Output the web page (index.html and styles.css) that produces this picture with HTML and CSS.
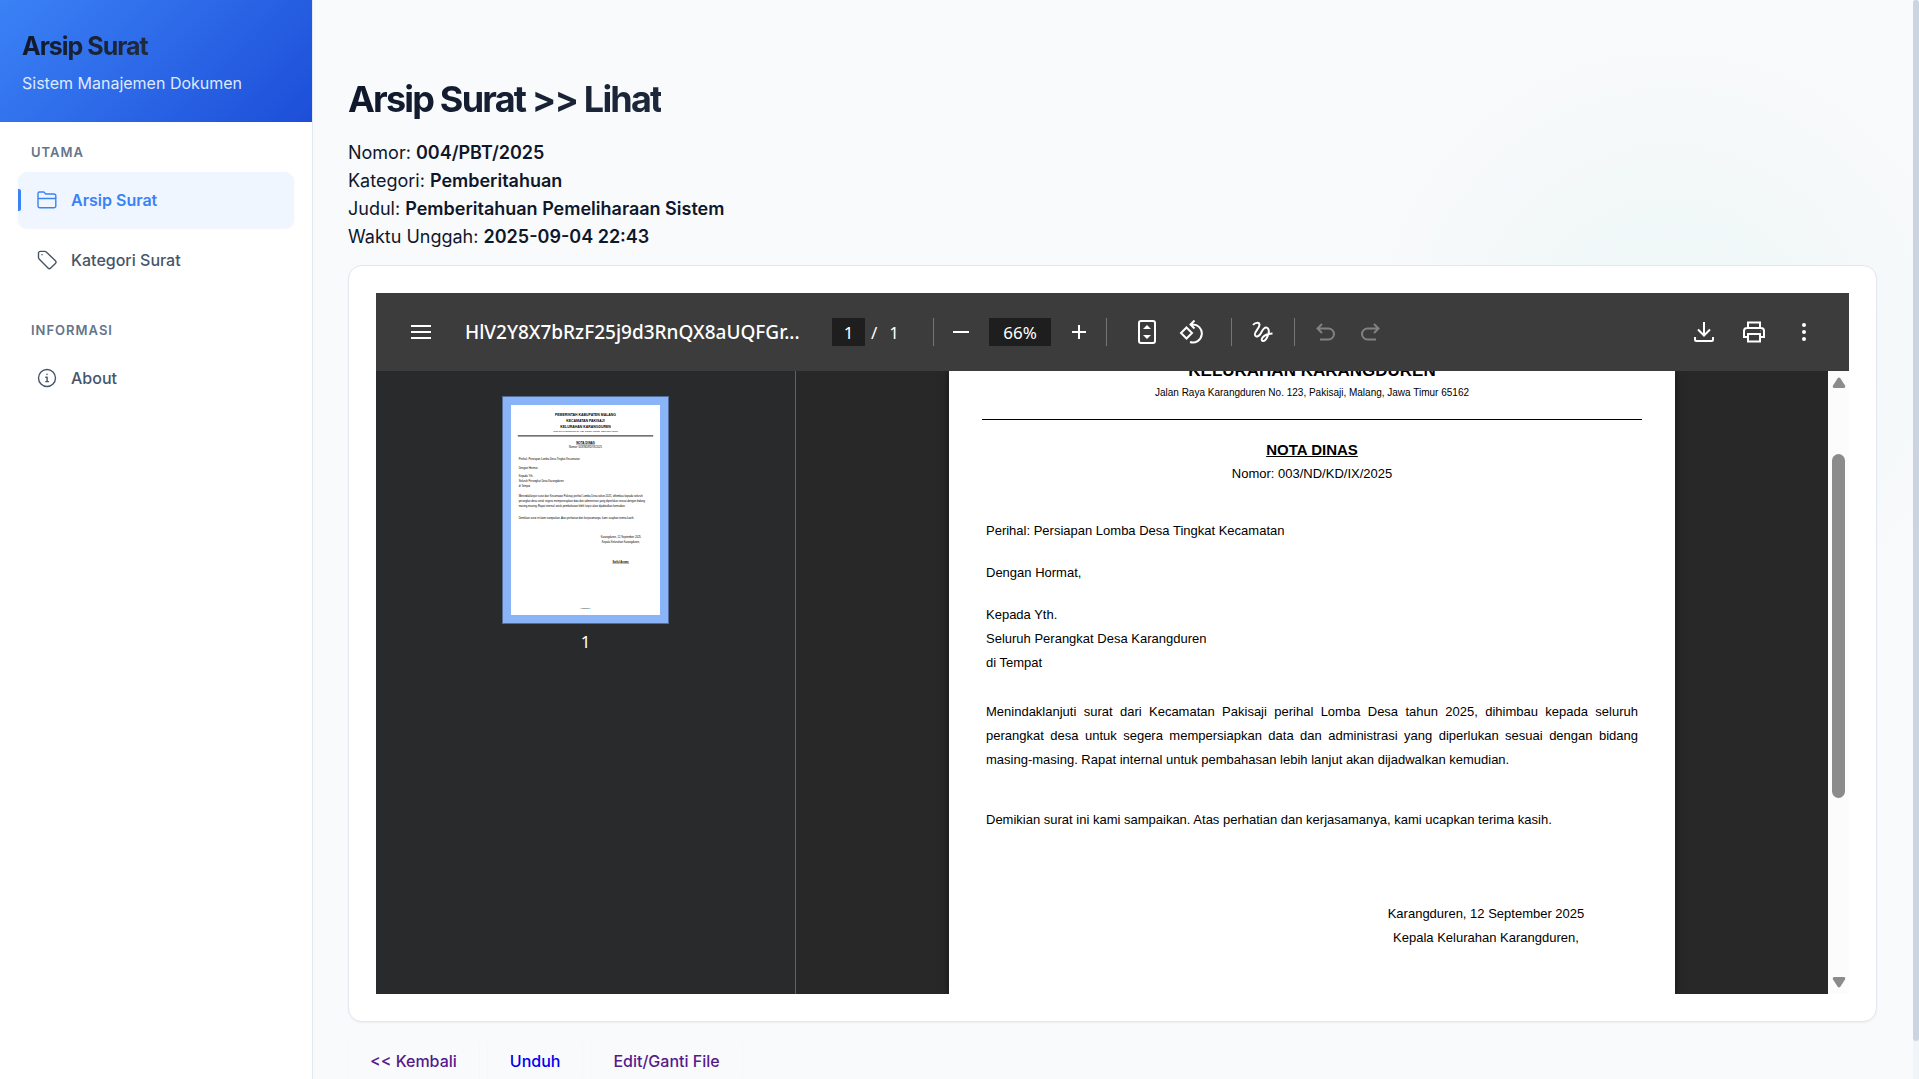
FILE: index.html
```html
<!DOCTYPE html>
<html lang="id">
<head>
<meta charset="utf-8">
<meta name="viewport" content="width=device-width, initial-scale=1">
<title>Arsip Surat &gt;&gt; Lihat</title>
<link rel="stylesheet" href="styles.css">
</head>
<body>
<div class="app">
  <aside class="sidebar">
    <header class="brand">
      <h2 class="brand-name">Arsip Surat</h2>
      <p class="brand-tagline">Sistem Manajemen Dokumen</p>
    </header>
    <nav class="nav">
      <h3 class="nav-heading">UTAMA</h3>
      <a class="nav-link active" href="#arsip">
        <svg class="nav-icon" viewBox="0 0 20 20"><path d="M1 16V3.500a1.500 1.500 0 0 1 1.500-1.500h4.300l2 2h8.200a1.800 1.800 0 0 1 1.800 1.800V16a1.800 1.800 0 0 1-1.800 1.800H2.800A1.800 1.800 0 0 1 1 16zM1 8.500h18"/></svg>
        Arsip Surat
      </a>
      <a class="nav-link" href="#kategori">
        <svg class="nav-icon" viewBox="0 0 20 20"><path d="M1.500 3.200v4.400c0 .5.200 1 .6 1.400l8.900 9c.8.800 1.900.8 2.700 0l4.700-4.600c.8-.8.8-1.900 0-2.700L9.300 2c-.4-.4-.9-.6-1.400-.6H3.400c-1 0-1.900.8-1.900 1.800zM5 4.800h.1"/></svg>
        Kategori Surat
      </a>
      <h3 class="nav-heading second">INFORMASI</h3>
      <a class="nav-link" href="#about">
        <svg class="nav-icon" viewBox="0 0 20 20"><circle cx="10" cy="10" r="8.500"/><path d="M8.800 9.200h1.300v4.300M8.800 13.600h2.700M10 6.200v.4"/></svg>
        About
      </a>
    </nav>
  </aside>

  <main class="main">
    <h1 class="title">Arsip Surat &gt;&gt; Lihat</h1>
    <div class="meta">
      <div>Nomor: <strong>004/PBT/2025</strong></div>
      <div>Kategori: <strong>Pemberitahuan</strong></div>
      <div>Judul: <strong>Pemberitahuan Pemeliharaan Sistem</strong></div>
      <div>Waktu Unggah: <strong>2025-09-04 22:43</strong></div>
    </div>

    <section class="card">
      <div class="viewer">
        <div class="toolbar">
          <button class="tool menu" aria-label="Menu"><svg viewBox="0 0 24 24"><path d="M2 6h20M2 12h20M2 18h20"/></svg></button>
          <span class="file-name">HlV2Y8X7bRzF25j9d3RnQX8aUQFGr...</span>
          <div class="pages"><input class="field page-field" aria-label="Halaman" value="1"><span>/</span><span>1</span></div>
          <span class="divider"></span>
          <div class="zoom">
            <button class="tool" aria-label="Perkecil"><svg viewBox="0 0 24 24"><path d="M4 12h16"/></svg></button>
            <input class="field zoom-field" aria-label="Zoom" value="66%">
            <button class="tool" aria-label="Perbesar"><svg viewBox="0 0 24 24"><path d="M5 12h14M12 5v14"/></svg></button>
          </div>
          <span class="divider"></span>
          <div class="fit">
            <button class="tool" aria-label="Paskan"><svg viewBox="0 0 24 24"><rect x="4" y="1" width="16" height="22" rx="2"/><path class="solid" d="M8 9l4-4 4 4zM8 15l4 4 4-4z"/></svg></button>
            <button class="tool" aria-label="Putar"><svg viewBox="0 0 24 24"><path d="M7.500 7.500L13 13l-5.500 5.500L2 13zM13 4.500a9 9 0 1 1-2 17.500M15.500 .5L11.500 4.500l4 4"/></svg></button>
          </div>
          <span class="divider"></span>
          <button class="tool pen" aria-label="Gambar"><svg viewBox="0 0 24 24"><path d="M2 5c2-2.500 6-3 6.500-.5C9 8 3 11.500 4 15c1 3 4.500 1 6-2 1.500-3.500 4-6.500 6.500-5 3.500 3-1 13-4.500 13-3 0-1-7 9.500-7.500"/></svg></button>
          <span class="divider"></span>
          <div class="history">
            <button class="tool" aria-label="Urungkan" disabled><svg viewBox="0 0 24 24"><path d="M8 4L3.500 8.500 8 13M3.500 8.500h11a5.500 5.500 0 0 1 0 11H6"/></svg></button>
            <button class="tool" aria-label="Ulangi" disabled><svg viewBox="0 0 24 24"><path d="M16 4l4.500 4.500L16 13M20.500 8.500h-11a5.500 5.500 0 0 0 0 11H18"/></svg></button>
          </div>
          <div class="actions">
            <button class="tool" aria-label="Unduh"><svg viewBox="0 0 24 24"><path d="M12 2v13M6 9.500l6 6 6-6M3 17v2.500q0 1.500 1.500 1.500h15q1.500 0 1.500-1.500V17"/></svg></button>
            <button class="tool" aria-label="Cetak"><svg viewBox="0 0 24 24"><path d="M6 17H2v-6q0-3 3-3h14q3 0 3 3v6h-4M6 8V2.500h12V8M6 14h12v7.500H6zM18.500 11h.2"/></svg></button>
            <button class="tool" aria-label="Lainnya"><svg viewBox="0 0 24 24"><path class="solid" d="M12 3a2 2 0 1 1 0 4 2 2 0 0 1 0-4zM12 10a2 2 0 1 1 0 4 2 2 0 0 1 0-4zM12 17a2 2 0 1 1 0 4 2 2 0 0 1 0-4z"/></svg></button>
          </div>
        </div>

        <div class="viewer-body">
          <div class="thumbs">
            <button class="thumb" aria-label="Halaman 1">
              <svg viewBox="0 0 726 1024">
                <g text-anchor="middle">
                  <g font-weight="bold" font-size="17">
                    <text x="363" y="52">PEMERINTAH KABUPATEN MALANG</text>
                    <text x="363" y="82">KECAMATAN PAKISAJI</text>
                    <text x="363" y="111">KELURAHAN KARANGDUREN</text>
                  </g>
                  <text x="363" y="130" font-size="10">Jalan Raya Karangduren No. 123, Pakisaji, Malang, Jawa Timur 65162</text>
                  <path d="M33 151h660" stroke="#444" stroke-width="6"/>
                  <text x="363" y="189" font-size="15" font-weight="bold" text-decoration="underline">NOTA DINAS</text>
                  <text x="363" y="211">Nomor: 003/ND/KD/IX/2025</text>
                  <text x="535" y="650">Karangduren, 12 September 2025</text>
                  <text x="535" y="674">Kepala Kelurahan Karangduren,</text>
                  <text x="535" y="768" font-weight="bold" text-decoration="underline">Saiful Anwar,</text>
                  <text x="363" y="993" font-size="10">Halaman 1</text>
                </g>
                <text x="37" y="269">Perihal: Persiapan Lomba Desa Tingkat Kecamatan</text>
                <text x="37" y="310">Dengan Hormat,</text>
                <text x="37" y="351">Kepada Yth.</text>
                <text x="37" y="376">Seluruh Perangkat Desa Karangduren</text>
                <text x="37" y="400">di Tempat</text>
                <text x="37" y="448">Menindaklanjuti surat dari Kecamatan Pakisaji perihal Lomba Desa tahun 2025, dihimbau kepada seluruh</text>
                <text x="37" y="473">perangkat desa untuk segera mempersiapkan data dan administrasi yang diperlukan sesuai dengan bidang</text>
                <text x="37" y="497">masing-masing. Rapat internal untuk pembahasan lebih lanjut akan dijadwalkan kemudian.</text>
                <text x="37" y="556">Demikian surat ini kami sampaikan. Atas perhatian dan kerjasamanya, kami ucapkan terima kasih.</text>
              </svg>
            </button>
            <span class="thumb-label">1</span>
          </div>
          <div class="canvas">
            <article class="sheet">
              <header class="letterhead">
                <p class="office">KELURAHAN KARANGDUREN</p>
                <p class="address">Jalan Raya Karangduren No. 123, Pakisaji, Malang, Jawa Timur 65162</p>
              </header>
              <div class="letter">
                <div class="subject"><p class="kind">NOTA DINAS</p><p>Nomor: 003/ND/KD/IX/2025</p></div>
                <p class="regarding">Perihal: Persiapan Lomba Desa Tingkat Kecamatan</p>
                <p class="greeting">Dengan Hormat,</p>
                <p class="recipient">Kepada Yth.<br>Seluruh Perangkat Desa Karangduren<br>di Tempat</p>
                <p class="body-text">Menindaklanjuti surat dari Kecamatan Pakisaji perihal Lomba Desa tahun 2025, dihimbau kepada seluruh perangkat desa untuk segera mempersiapkan data dan administrasi yang diperlukan sesuai dengan bidang masing-masing. Rapat internal untuk pembahasan lebih lanjut akan dijadwalkan kemudian.</p>
                <p class="closing">Demikian surat ini kami sampaikan. Atas perhatian dan kerjasamanya, kami ucapkan terima kasih.</p>
                <p class="signature">Karangduren, 12 September 2025<br>Kepala Kelurahan Karangduren,</p>
              </div>
            </article>
          </div>
          <div class="scroll">
            <svg class="arrow" viewBox="0 0 14 12"><path d="M5.500 1.500q1.500-2 3 0l4.500 7q1 2.500-1.500 2.500h-9q-2.500 0-1.500-2.500z"/></svg>
            <div class="scroll-track"><div class="scroll-thumb"></div></div>
            <svg class="arrow" viewBox="0 0 14 12"><path d="M5.500 10.500q1.500 2 3 0l4.500-7Q14 1 11.500 1h-9Q0 1 1 3.500z"/></svg>
          </div>
        </div>
      </div>
    </section>

    <div class="links">
      <a class="btn visited" href="#kembali">&lt;&lt; Kembali</a>
      <a class="btn" href="#unduh">Unduh</a>
      <a class="btn visited" href="#edit">Edit/Ganti File</a>
    </div>
  </main>
  <div class="page-scroll"><div class="page-scroll-thumb"></div></div>
</div>
</body>
</html>
```
FILE: styles.css
```css
* { box-sizing: border-box; }

body {
  margin: 0;
  font-family: Inter, sans-serif;
  color: #0f172a;
  background: #f8fafc;
}

h1, h2, h3, p { margin: 0; }
a { text-decoration: none; }
button { border: 0; padding: 0; background: none; font: inherit; }

.app {
  display: flex;
  height: 100vh;
  overflow: hidden;
  background:
    radial-gradient(circle at 87% 32%, rgba(16, 185, 129, 0.05), transparent 330px),
    #f9fafc;
}

/* Sidebar */
.sidebar {
  flex: 0 0 313px;
  background: #fff;
  border-right: 1px solid #e2e8f0;
}
.brand {
  height: 122px;
  padding: 30px 22px 0;
  background: linear-gradient(135deg, #3b82f6, #1d4ed8);
}
.brand-name {
  font-size: 25px;
  line-height: 32px;
  font-weight: 700;
  letter-spacing: -1px;
  background: linear-gradient(135deg, #0f172a, #334155);
  background-clip: text;
  color: transparent;
}
.brand-tagline {
  margin-top: 8px;
  font-size: 16px;
  line-height: 26px;
  color: #dfe9fd;
}
.nav {
  display: flex;
  flex-direction: column;
  gap: 4px;
  padding: 18px 18px 0;
}
.nav-heading {
  margin-bottom: 4px;
  padding: 0 13px;
  font-size: 13px;
  line-height: 24px;
  font-weight: 600;
  letter-spacing: 1px;
  color: #64748b;
}
.nav-heading.second { margin-top: 26px; }
.nav-link {
  position: relative;
  display: flex;
  align-items: center;
  gap: 14px;
  height: 56px;
  padding: 0 19px;
  border-radius: 9px;
  font-size: 16px;
  font-weight: 500;
  color: #475569;
}
.nav-link.active {
  background: #eff6ff;
  color: #3b82f6;
  font-weight: 600;
  box-shadow: 0 1px 2px rgba(0, 0, 0, 0.05);
}
.nav-link.active::before {
  content: "";
  position: absolute;
  left: 0;
  top: 17px;
  width: 3px;
  height: 22px;
  background: #3b82f6;
  border-radius: 0 2px 2px 0;
}
.nav-icon {
  width: 20px;
  height: 20px;
  fill: none;
  stroke: currentColor;
  stroke-width: 1.4;
  stroke-linecap: round;
  stroke-linejoin: round;
}

/* Main column */
.main {
  flex: 1;
  min-width: 0;
  padding: 75px 36px 0 35px;
}
.title {
  width: fit-content;
  font-size: 36px;
  line-height: 48px;
  font-weight: 700;
  letter-spacing: -0.05em;
  background: linear-gradient(135deg, #0f172a, #1e293b);
  background-clip: text;
  color: transparent;
}
.meta {
  margin-top: 16px;
  font-size: 18px;
  line-height: 28px;
}
.meta strong { font-weight: 600; }
.card {
  margin-top: 14px;
  padding: 27px;
  background: #fff;
  border: 1px solid #e2e8f0;
  border-radius: 14px;
  box-shadow: 0 1px 2px rgba(0, 0, 0, 0.05);
}

/* PDF viewer */
.viewer { height: 701px; display: flex; flex-direction: column; }
.toolbar {
  flex: 0 0 78px;
  display: flex;
  align-items: center;
  background: #3c3c3c;
  color: #fff;
  font-family: "Noto Sans", sans-serif;
  font-size: 17px;
}
.tool { width: 24px; height: 24px; color: #fff; }
.tool:disabled { color: #818181; }
.tool svg {
  display: block;
  width: 24px;
  height: 24px;
  fill: none;
  stroke: currentColor;
  stroke-width: 2;
}
.tool .solid { fill: currentColor; stroke: none; }
.menu { margin-left: 33px; }
.file-name {
  width: 399px;
  padding-left: 32px;
  font-size: 19px;
  font-weight: 500;
  white-space: nowrap;
}
.field {
  height: 28px;
  border: 0;
  padding: 0;
  background: #1e1e1e;
  color: #fff;
  font: inherit;
  text-align: center;
}
.pages { display: flex; align-items: center; gap: 12px; width: 101px; }
.page-field { width: 33px; margin-right: -6px; }
.divider { width: 1px; height: 28px; background: #757575; }
.zoom, .fit, .history { display: flex; align-items: center; justify-content: center; }
.zoom { width: 172px; gap: 16px; }
.zoom-field { width: 62px; }
.fit { width: 124px; gap: 20px; }
.pen { margin: 0 19px; }
.history { gap: 20px; margin-left: 19px; }
.actions { display: flex; gap: 26px; margin-left: auto; padding-right: 33px; }

.viewer-body { flex: 1; min-height: 0; display: flex; }
.thumbs {
  flex: 0 0 420px;
  display: flex;
  flex-direction: column;
  align-items: center;
  padding-top: 25px;
  background: #292a2c;
  border-right: 1px solid #5f6062;
  color: #fff;
  font-family: "Noto Sans", sans-serif;
}
.thumb {
  padding: 8px;
  background: #8ab4f8;
  border: 1px solid #536d98;
}
.thumb svg {
  display: block;
  width: 149px;
  height: 210px;
  background: #fff;
  font-family: "Liberation Sans", Arial, sans-serif;
  font-size: 13px;
}
.thumb-label { margin-top: 6px; font-size: 17px; line-height: 24px; }

.canvas {
  flex: 1;
  min-width: 0;
  display: flex;
  justify-content: center;
  overflow: hidden;
  background: #282828;
}
.sheet {
  width: 726px;
  padding: 0 33px;
  background: #fff;
  box-shadow: 0 0 8px rgba(0, 0, 0, 0.5);
  color: #000;
  font-family: "Liberation Sans", Arial, sans-serif;
  font-size: 13px;
  line-height: 24px;
}
/* The sheet is scrolled, so the letterhead starts above the visible area. */
.letterhead {
  height: 61px;
  margin-top: -12px;
  border-bottom: 1px solid #000;
  text-align: center;
}
.office { font-size: 17px; font-weight: 700; }
.address { font-size: 10px; line-height: 20px; }
.letter { padding: 18px 4px 0; }
.subject { text-align: center; }
.kind { font-size: 15px; font-weight: 700; text-decoration: underline; }
.regarding { margin-top: 33px; }
.greeting { margin-top: 18px; }
.recipient { margin-top: 18px; }
.body-text { margin-top: 25px; text-align: justify; }
.closing { margin-top: 36px; }
.signature { width: 204px; margin: 70px 50px 0 auto; text-align: center; }

.scroll {
  flex: 0 0 21px;
  display: flex;
  flex-direction: column;
  align-items: center;
  padding: 6px 0;
  background: #fcfcfc;
}
.arrow { width: 14px; height: 12px; fill: #8b8b8b; }
.scroll-track { flex: 1; width: 13px; padding-top: 65px; }
.scroll-thumb { height: 344px; border-radius: 7px; background: #8b8b8b; }

/* Links under the viewer */
.links { display: flex; gap: 9px; margin-top: 12px; }
.btn {
  padding: 14px 22px;
  border-radius: 11px;
  font-size: 16px;
  line-height: 26px;
  font-weight: 500;
  color: #0000ee;
  box-shadow: 0 1px 2px rgba(0, 0, 0, 0.05);
}
.btn.visited { color: #551a8b; }

.page-scroll { flex: 0 0 6px; background: #f1f5f9; }
.page-scroll-thumb { height: 1041px; max-height: 97%; border-radius: 3px; background: #cbd5e1; }
```
